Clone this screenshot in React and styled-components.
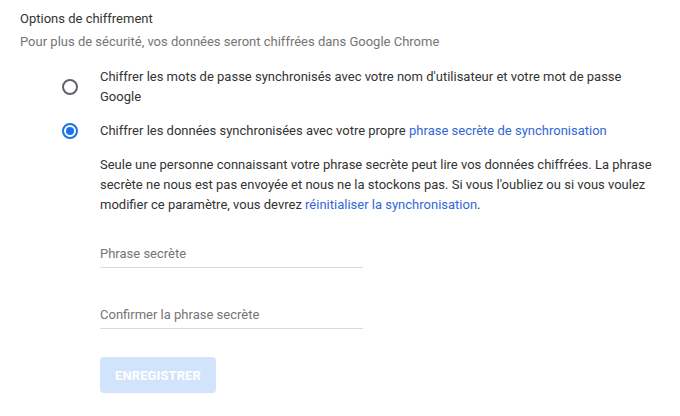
import React from "react";
import styled, { createGlobalStyle } from "styled-components";

const GlobalStyle = createGlobalStyle`
  body {
    margin: 0;
    background: #ffffff;
    font-family: Roboto, "Liberation Sans", Arial, sans-serif;
    font-size: 13px;
    color: #333333;
  }
`;

const Page = styled.div`
  width: 680px;
  height: 416px;
  padding: 9px 20px 0 20px;
  box-sizing: border-box;
`;

const Title = styled.div`
  line-height: 20px;
  color: #333333;
`;

const Subtitle = styled.div`
  margin-top: 3px;
  line-height: 20px;
  color: #757575;
`;

const Options = styled.div`
  margin-top: 15px;
  padding-left: 42px;
  display: flex;
  flex-direction: column;
  gap: 14px;
`;

const Option = styled.label`
  display: flex;
  align-items: center;
  gap: 22px;
  cursor: pointer;
`;

const Radio = styled.span`
  flex: none;
  width: 16px;
  height: 16px;
  box-sizing: border-box;
  border-radius: 50%;
  border: 2px solid ${(p) => (p.checked ? "#1a73e8" : "#5f6368")};
  display: flex;
  align-items: center;
  justify-content: center;

  &::after {
    content: "";
    width: 8px;
    height: 8px;
    border-radius: 50%;
    background: #1a73e8;
    display: ${(p) => (p.checked ? "block" : "none")};
  }
`;

const OptionText = styled.div`
  line-height: 20px;
  color: #333333;
`;

const Link = styled.a`
  color: #3367d6;
  text-decoration: none;
`;

const Details = styled.div`
  padding-left: 38px;
`;

const Paragraph = styled.p`
  margin: 0;
  line-height: 20px;
  white-space: nowrap;
  color: #333333;
`;

const Field = styled.div`
  width: 263px;
  margin-top: ${(p) => p.top}px;
  padding-bottom: 3px;
  border-bottom: 1px solid #dadada;
  line-height: 20px;
  color: #757575;
`;

const SaveButton = styled.button`
  margin-top: 28px;
  width: 116px;
  height: 36px;
  border: none;
  border-radius: 4px;
  background: #d2e3fc;
  color: #ffffff;
  font-family: Roboto, "Liberation Sans", Arial, sans-serif;
  font-size: 13px;
  font-weight: 700;
  letter-spacing: 0.1px;
  padding: 0;
`;

export default function App() {
  return (
    <>
      <GlobalStyle />
      <Page>
        <Title>Options de chiffrement</Title>
        <Subtitle>
          Pour plus de sécurité, vos données seront chiffrées dans Google Chrome
        </Subtitle>
        <Options>
          <Option>
            <Radio />
            <OptionText>
              Chiffrer les mots de passe synchronisés avec votre nom d'utilisateur et votre mot de passe
              <br />
              Google
            </OptionText>
          </Option>
          <Option>
            <Radio checked />
            <OptionText>
              Chiffrer les données synchronisées avec votre propre{" "}
              <Link href="#">phrase secrète de synchronisation</Link>
            </OptionText>
          </Option>
          <Details>
            <Paragraph>
              Seule une personne connaissant votre phrase secrète peut lire vos données chiffrées. La phrase
              <br />
              secrète ne nous est pas envoyée et nous ne la stockons pas. Si vous l'oubliez ou si vous voulez
              <br />
              modifier ce paramètre, vous devrez{" "}
              <Link href="#">réinitialiser la synchronisation</Link>.
            </Paragraph>
            <Field top={29}>Phrase secrète</Field>
            <Field top={37}>Confirmer la phrase secrète</Field>
            <SaveButton disabled>ENREGISTRER</SaveButton>
          </Details>
        </Options>
      </Page>
    </>
  );
}
